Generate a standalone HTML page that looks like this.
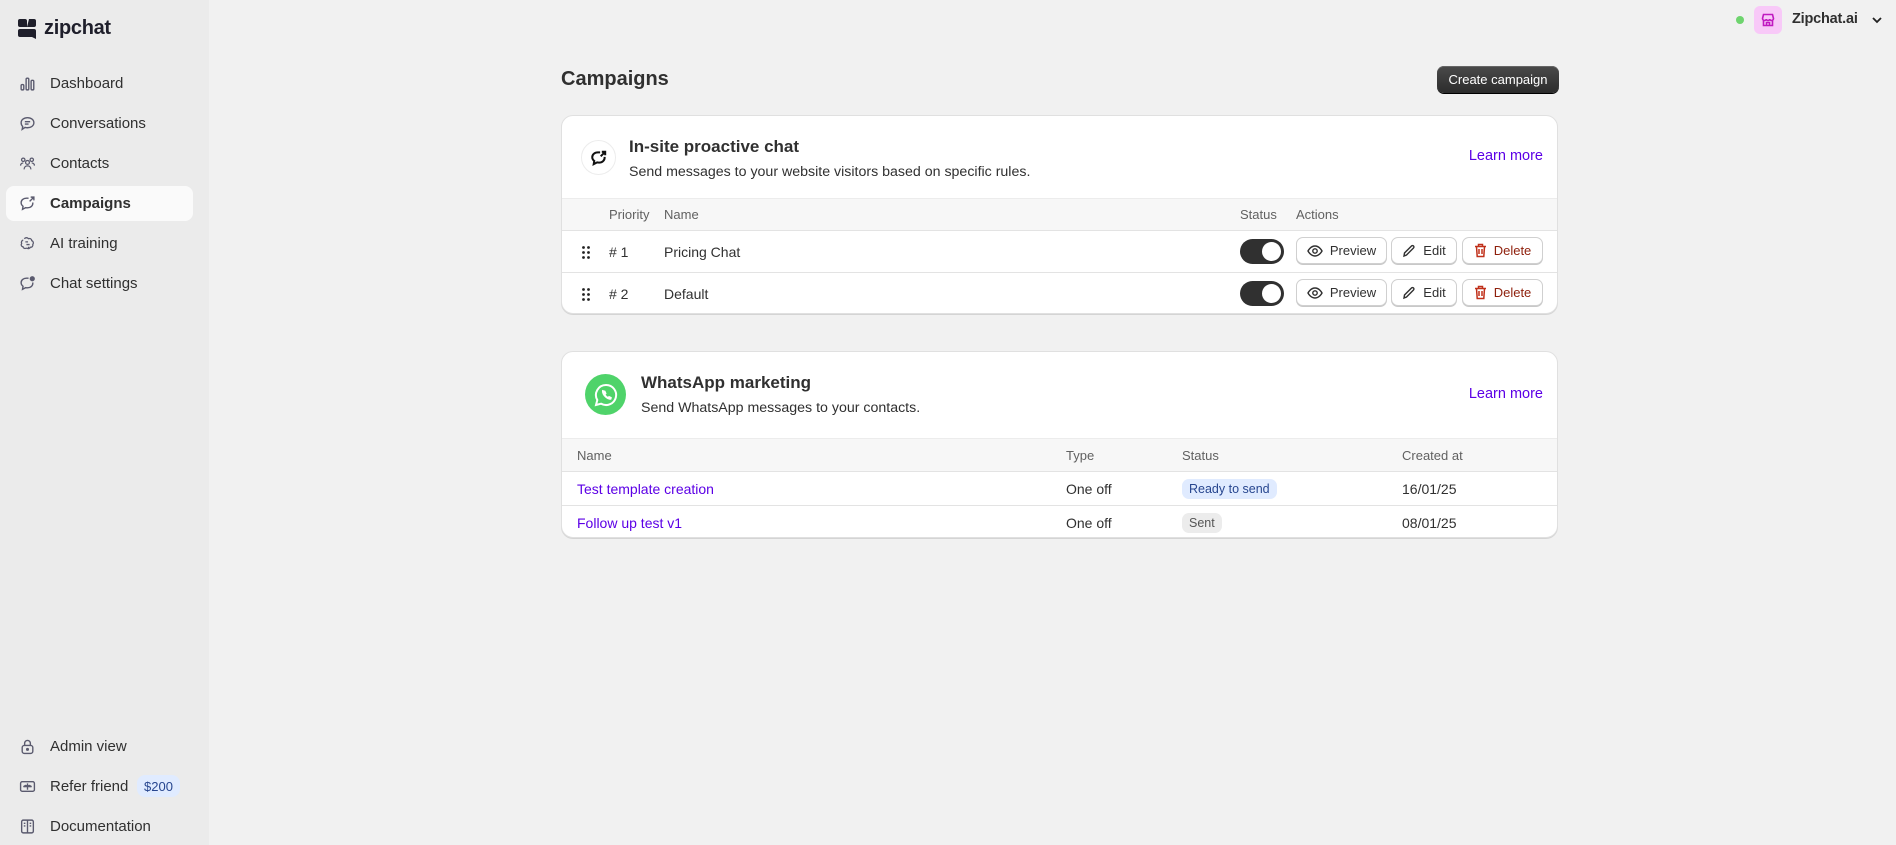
<!DOCTYPE html>
<html><head><meta charset="utf-8"><style>
*{box-sizing:border-box;margin:0;padding:0}
body{width:1896px;height:845px;background:#f1f1f1;font-family:"Liberation Sans",sans-serif;color:#303030;position:relative;overflow:hidden;font-size:14px}
.side{position:absolute;left:0;top:0;width:209px;height:845px;background:#ebebeb}
.abs{position:absolute}
.nav{position:absolute;left:6px;width:187px;height:35px;display:flex;align-items:center;font-size:15px;color:#303030}
.nav svg{position:absolute;left:13px;width:17px;height:17px}
.nav span{position:absolute;left:44px}
.nav.act{background:#fafafa;border-radius:8px;font-weight:bold}
.card{position:absolute;left:561px;width:997px;background:#fff;border:1px solid #e0e0e0;border-radius:12px;box-shadow:0 1px 0 #d4d4d4;overflow:hidden}
.th{position:absolute;left:0;right:0;background:#f7f7f7;border-top:1px solid #ececec;border-bottom:1px solid #e3e3e3}
.t{position:absolute;white-space:nowrap}
.hd{font-size:13px;color:#616161}
.row{position:absolute;left:0;right:0;border-bottom:1px solid #e3e3e3}
.btn{position:absolute;height:27px;border:1px solid #d0d0d0;border-radius:7px;box-shadow:0 1px 0 #c8c8c8;display:flex;align-items:center;justify-content:center;gap:7px;font-size:13px;background:#fff}
.tog{position:absolute;width:44px;height:25px;border-radius:13px;background:#303030}
.tog::after{content:"";position:absolute;right:3px;top:3px;width:19px;height:19px;border-radius:50%;background:#fff}
.lm{position:absolute;right:14px;color:#5c00e6;font-size:14.5px}
.link{color:#5c00e6}
.badge{position:absolute;height:20px;padding:0 7px;border-radius:7px;font-size:12.5px;display:flex;align-items:center}
.drag{position:absolute;left:20px;top:15px}
</style></head><body>
<div class="side">
 <div class="abs" style="left:17px;top:18px;width:20px;height:22px">
  <svg width="20" height="22" viewBox="0 0 20 22"><path d="M3 1h5a2 2 0 012 2v6H3a2 2 0 01-2-2V3a2 2 0 012-2zM12 1h5a2 2 0 012 2v4a2 2 0 01-2 2h-7zM1 13a2 2 0 012-2h7v8H3a2 2 0 01-2-2zM10 11h7a2 2 0 012 2v8l-4-2h-5z" fill="#1f1f2b"/></svg>
 </div>
 <div class="t" style="left:44px;top:17px;font-size:20px;font-weight:bold;color:#1f1f2b;letter-spacing:-0.3px">zipchat</div>

 <div class="nav" style="top:66px"><svg viewBox="0 0 16 16" fill="none" stroke="#5a5a6e" stroke-width="1.3"><rect x="2" y="9" width="2.5" height="5" rx="1"/><rect x="6.7" y="3" width="2.5" height="11" rx="1"/><rect x="11.4" y="5" width="2.5" height="9" rx="1"/></svg><span>Dashboard</span></div>
 <div class="nav" style="top:106px"><svg viewBox="0 0 16 16" fill="none" stroke="#5a5a6e" stroke-width="1.3"><path d="M8 2.5c3.3 0 6 2 6 4.8s-2.7 4.7-6 4.7c-.8 0-1.6-.1-2.3-.3L3 13.5l.5-2.6C2.6 10 2 8.7 2 7.3 2 4.5 4.7 2.5 8 2.5z"/><path d="M5.5 6.3h5M5.5 8.5h3.5"/></svg><span>Conversations</span></div>
 <div class="nav" style="top:146px"><svg viewBox="0 0 16 16" fill="none" stroke="#5a5a6e" stroke-width="1.2"><circle cx="4" cy="4.5" r="1.6"/><circle cx="12" cy="4.5" r="1.6"/><circle cx="8" cy="7" r="1.8"/><path d="M1.5 10c0-1.5 1-2.5 2.5-2.5M14.5 10c0-1.5-1-2.5-2.5-2.5M4.8 13.5c0-2 1.4-3.3 3.2-3.3s3.2 1.3 3.2 3.3"/></svg><span>Contacts</span></div>
 <div class="nav act" style="top:186px"><svg viewBox="0 0 16 16" fill="none" stroke="#5a5a6e" stroke-width="1.3"><path d="M9 3H7C4.2 3 2 4.8 2 7.2c0 1.4.7 2.6 1.8 3.4L3.3 13.5l3-1.6c.5.1 1.1.2 1.7.2 2.8 0 5-1.8 5-4.3V7"/><path d="M10 6l4-4M11 2h3v3"/></svg><span>Campaigns</span></div>
 <div class="nav" style="top:226px"><svg viewBox="0 0 16 16" fill="none" stroke="#5a5a6e" stroke-width="1.2"><path d="M5 3.5c1-1.3 3-1.3 4 0 1.5-.6 3 .4 3 1.8 1.5.5 2 2.4 1 3.6.4 1.5-.8 2.8-2.3 2.6-.5 1.2-2 1.6-3 1H6.5c-1.2.5-2.6-.2-2.8-1.5C2.2 11 1.6 9.2 2.5 8 1.8 6.6 2.7 5 4 4.7"/><path d="M6 6.5h2.5M7 9h3M9 11v2"/></svg><span>AI training</span></div>
 <div class="nav" style="top:266px"><svg viewBox="0 0 16 16" fill="none" stroke="#5a5a6e" stroke-width="1.3"><path d="M9 3H7C4.2 3 2 4.8 2 7.2c0 1.4.7 2.6 1.8 3.4L3.3 13.5l3-1.6c.5.1 1.1.2 1.7.2 2.8 0 5-1.8 5-4.3V7"/><circle cx="12.5" cy="3.5" r="1.8" fill="#5a5a6e"/></svg><span>Chat settings</span></div>

 <div class="nav" style="top:729px"><svg viewBox="0 0 16 16" fill="none" stroke="#5a5a6e" stroke-width="1.3"><rect x="3" y="7" width="10" height="7.5" rx="2"/><path d="M5.3 7V5a2.7 2.7 0 015.4 0v2"/><circle cx="8" cy="10.7" r=".8" fill="#5a5a6e"/></svg><span>Admin view</span></div>
 <div class="nav" style="top:769px"><svg viewBox="0 0 16 16" fill="none" stroke="#5a5a6e" stroke-width="1.3"><rect x="1.5" y="3.5" width="13" height="9" rx="1.5"/><path d="M8 5v6M4 8h8M8 8c-2-2-3.5-.5-2 .5M8 8c2-2 3.5-.5 2 .5"/></svg><span>Refer friend</span></div>
 <div class="badge" style="left:137px;top:775px;background:#e0ebff;color:#27468f;font-size:13px;height:22px;border-radius:8px">$200</div>
 <div class="nav" style="top:809px"><svg viewBox="0 0 16 16" fill="none" stroke="#5a5a6e" stroke-width="1.3"><rect x="2.5" y="2" width="11" height="12" rx="1.5"/><path d="M8 2v12M4.5 5h1.5M4.5 7.5h1.5M10 5h1.5M10 7.5h1.5"/></svg><span>Documentation</span></div>
</div>

<div class="abs" style="left:1736px;top:16px;width:8px;height:8px;border-radius:50%;background:#6ed46e"></div>
<div class="abs" style="left:1754px;top:6px;width:28px;height:28px;border-radius:6px;background:#f8c9f8;display:flex;align-items:center;justify-content:center">
 <svg width="16" height="16" viewBox="0 0 16 16" fill="none" stroke="#c01ac0" stroke-width="1.6"><path d="M2.5 6.5L3.5 2.5h9l1 4c0 1.2-1 2-2 2s-1.8-.8-1.8-1.5c0 .7-.8 1.5-1.7 1.5s-1.7-.8-1.7-1.5c0 .7-.8 1.5-1.8 1.5s-2-.8-2-2zM3.5 8.5v5h9v-5M6.5 13.5v-3h3v3"/></svg>
</div>
<div class="t" style="left:1792px;top:11px;font-size:14.5px;font-weight:bold;color:#303030;letter-spacing:-0.2px">Zipchat.ai</div>
<svg class="abs" style="left:1871px;top:15px" width="12" height="10" viewBox="0 0 12 10"><path d="M2 3l4 4 4-4" fill="none" stroke="#222" stroke-width="1.8"/></svg>

<div class="t" style="left:561px;top:68px;font-size:20px;font-weight:bold;color:#303030">Campaigns</div>
<div class="abs" style="left:1437px;top:66px;width:122px;height:27px;border-radius:7px;background:linear-gradient(#4a4a4a,#2c2c2c);box-shadow:0 1px 0 #000, inset 0 1px 0 #666;color:#fff;font-size:13px;display:flex;align-items:center;justify-content:center">Create campaign</div>

<div class="card" style="top:115px;height:199px">
 <div class="abs" style="left:19px;top:24px;width:35px;height:35px;border-radius:50%;border:1.5px solid #ececec;display:flex;align-items:center;justify-content:center">
  <svg width="18" height="18" viewBox="0 0 16 16" fill="none" stroke="#111" stroke-width="1.8"><path d="M9 3H7C4.2 3 2 4.8 2 7.2c0 1.4.7 2.6 1.8 3.4L3.3 13.5l3-1.6c.5.1 1.1.2 1.7.2 2.8 0 5-1.8 5-4.3V7"/><path d="M9.5 6.5l4-4M10.5 2.5h3v3"/></svg>
 </div>
 <div class="t" style="left:67px;top:21px;font-size:17px;font-weight:bold">In-site proactive chat</div>
 <div class="t" style="left:67px;top:48px;font-size:14.2px">Send messages to your website visitors based on specific rules.</div>
 <div class="lm" style="top:32px">Learn more</div>
 <div class="th" style="top:82px;height:33px">
  <div class="t hd" style="left:47px;top:8px">Priority</div>
  <div class="t hd" style="left:102px;top:8px">Name</div>
  <div class="t hd" style="left:678px;top:8px">Status</div>
  <div class="t hd" style="left:734px;top:8px">Actions</div>
 </div>
 <div class="row" style="top:115px;height:42px">
  <svg class="drag" width="8" height="13" viewBox="0 0 8 13" fill="#222"><circle cx="1.5" cy="1.5" r="1.4"/><circle cx="6.5" cy="1.5" r="1.4"/><circle cx="1.5" cy="6.5" r="1.4"/><circle cx="6.5" cy="6.5" r="1.4"/><circle cx="1.5" cy="11.5" r="1.4"/><circle cx="6.5" cy="11.5" r="1.4"/></svg>
  <div class="t" style="left:47px;top:13px;font-size:14px"># 1</div>
  <div class="t" style="left:102px;top:13px;font-size:14px">Pricing Chat</div>
  <div class="tog" style="left:678px;top:8px"></div>
 </div>
 <div class="row" style="top:157px;height:42px;border-bottom:none">
  <svg class="drag" width="8" height="13" viewBox="0 0 8 13" fill="#222"><circle cx="1.5" cy="1.5" r="1.4"/><circle cx="6.5" cy="1.5" r="1.4"/><circle cx="1.5" cy="6.5" r="1.4"/><circle cx="6.5" cy="6.5" r="1.4"/><circle cx="1.5" cy="11.5" r="1.4"/><circle cx="6.5" cy="11.5" r="1.4"/></svg>
  <div class="t" style="left:47px;top:13px;font-size:14px"># 2</div>
  <div class="t" style="left:102px;top:13px;font-size:14px">Default</div>
  <div class="tog" style="left:678px;top:8px"></div>
 </div>
</div>

<div class="btn" style="left:1296px;top:237px;width:91px"><svg width="16" height="14" viewBox="0 0 16 14" fill="none" stroke="#303030" stroke-width="1.4"><path d="M1 7s2.5-5 7-5 7 5 7 5-2.5 5-7 5-7-5-7-5z"/><circle cx="8" cy="7" r="2.2"/></svg>Preview</div>
<div class="btn" style="left:1391px;top:237px;width:66px"><svg width="14" height="14" viewBox="0 0 14 14" fill="none" stroke="#303030" stroke-width="1.4"><path d="M2 12l.5-3L9.5 2a1.4 1.4 0 012 2L4.5 11z"/></svg>Edit</div>
<div class="btn" style="left:1462px;top:237px;width:81px;color:#8e1f0b"><svg width="13" height="15" viewBox="0 0 13 15" fill="none" stroke="#c0301a" stroke-width="1.5"><path d="M1 3.5h11M4.5 3.5V1.5h4v2M2.5 3.5l.7 10h6.6l.7-10M5 6v5M8 6v5"/></svg>Delete</div>
<div class="btn" style="left:1296px;top:279px;width:91px"><svg width="16" height="14" viewBox="0 0 16 14" fill="none" stroke="#303030" stroke-width="1.4"><path d="M1 7s2.5-5 7-5 7 5 7 5-2.5 5-7 5-7-5-7-5z"/><circle cx="8" cy="7" r="2.2"/></svg>Preview</div>
<div class="btn" style="left:1391px;top:279px;width:66px"><svg width="14" height="14" viewBox="0 0 14 14" fill="none" stroke="#303030" stroke-width="1.4"><path d="M2 12l.5-3L9.5 2a1.4 1.4 0 012 2L4.5 11z"/></svg>Edit</div>
<div class="btn" style="left:1462px;top:279px;width:81px;color:#8e1f0b"><svg width="13" height="15" viewBox="0 0 13 15" fill="none" stroke="#c0301a" stroke-width="1.5"><path d="M1 3.5h11M4.5 3.5V1.5h4v2M2.5 3.5l.7 10h6.6l.7-10M5 6v5M8 6v5"/></svg>Delete</div>

<div class="card" style="top:351px;height:187px">
 <div class="abs" style="left:23px;top:22px;width:41px;height:41px;border-radius:50%;background:#4fd36a;display:flex;align-items:center;justify-content:center">
  <svg width="26" height="26" viewBox="0 0 26 26" fill="none" stroke="#fff" stroke-width="2"><path d="M13 3a10 10 0 00-8.7 15L3 23l5.2-1.3A10 10 0 1013 3z"/><path d="M9.5 8.5c-.5 2 1 5 3.5 7s4.5 2 5 1.5l.3-1.5-2.3-1-1 1c-1-.5-2.5-2-3-3l1-1-1-2.3z" fill="#fff" stroke-width="1"/></svg>
 </div>
 <div class="t" style="left:79px;top:21px;font-size:17px;font-weight:bold">WhatsApp marketing</div>
 <div class="t" style="left:79px;top:48px;font-size:14.2px">Send WhatsApp messages to your contacts.</div>
 <div class="lm" style="top:34px">Learn more</div>
 <div class="th" style="top:86px;height:34px">
  <div class="t hd" style="left:15px;top:9px">Name</div>
  <div class="t hd" style="left:504px;top:9px">Type</div>
  <div class="t hd" style="left:620px;top:9px">Status</div>
  <div class="t hd" style="left:840px;top:9px">Created at</div>
 </div>
 <div class="row" style="top:120px;height:34px">
  <div class="t link" style="left:15px;top:9px;font-size:14px">Test template creation</div>
  <div class="t" style="left:504px;top:9px;font-size:14px">One off</div>
  <div class="badge" style="left:620px;top:7px;background:#e0ebff;color:#27468f">Ready to send</div>
  <div class="t" style="left:840px;top:9px;font-size:14px">16/01/25</div>
 </div>
 <div class="row" style="top:154px;height:33px;border-bottom:none">
  <div class="t link" style="left:15px;top:9px;font-size:14px">Follow up test v1</div>
  <div class="t" style="left:504px;top:9px;font-size:14px">One off</div>
  <div class="badge" style="left:620px;top:7px;background:#ececec;color:#555">Sent</div>
  <div class="t" style="left:840px;top:9px;font-size:14px">08/01/25</div>
 </div>
</div>
</body></html>
